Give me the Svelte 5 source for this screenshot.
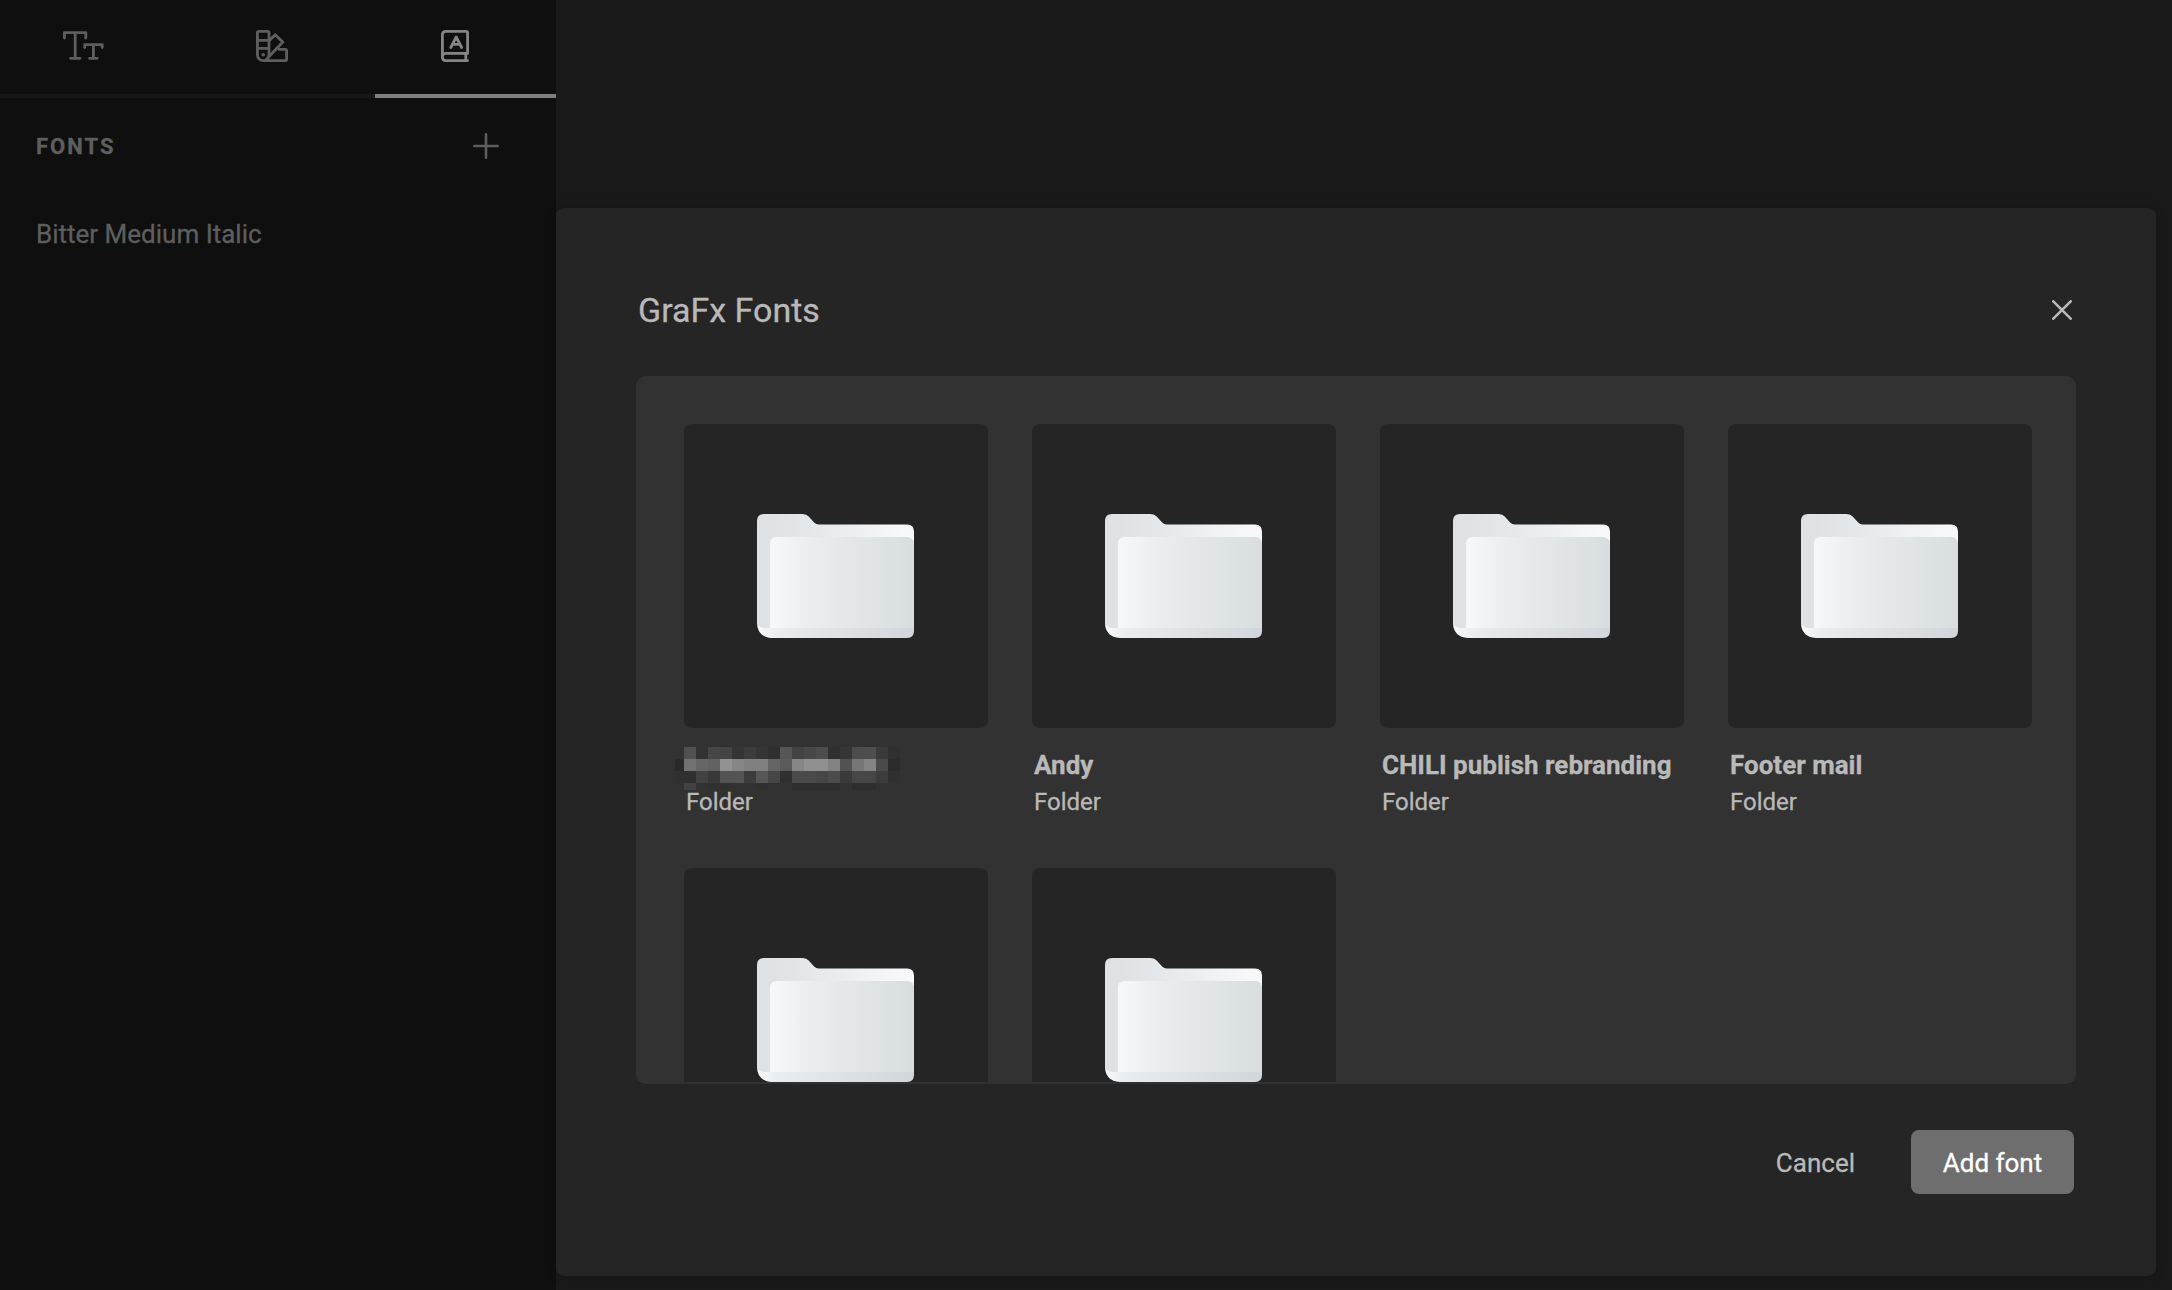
<script>
  const folders = [
    { id: 1, pixelated: true },
    { id: 2, name: 'Andy' },
    { id: 3, name: 'CHILI publish rebranding' },
    { id: 4, name: 'Footer mail' },
    { id: 5 },
    { id: 6 }
  ];

  // Grey levels of the pixelated name, one row per line of blocks
  const mosaic = [
    [50, 80, 50, 70, 68, 53, 60, 53, 48, 86, 67, 72, 77, 48, 54, 76, 78, 58, 48],
    [42, 114, 102, 98, 146, 134, 128, 128, 100, 90, 134, 144, 144, 130, 82, 118, 132, 74, 44],
    [48, 48, 66, 56, 84, 84, 60, 86, 70, 48, 74, 74, 70, 76, 58, 70, 70, 60, 48],
    [50, 66, 50, 48, 48, 50, 50, 48, 50, 50, 46, 46, 46, 46, 50, 46, 46, 50, 50]
  ];
</script>

<div class="app">
  <aside>
    <nav>
      <button class="tab" aria-label="Text styles">
        <svg class="tt" viewBox="0 0 41 29" fill="none" stroke="currentColor" stroke-width="2.8" stroke-linecap="round" stroke-linejoin="round">
          <path d="M1.4 7V1.6H22.8V7M12.2 1.6V27.3M7.5 27.3H17M21.7 16.6V13.7H39.2V16.6M30.4 13.7V27.3M26.6 27.3H34.2" />
        </svg>
      </button>
      <button class="tab" aria-label="Colors">
        <svg class="swatch" viewBox="0 0 32 32" fill="none" stroke="currentColor" stroke-width="2.8" stroke-linejoin="round">
          <path d="M1.4 2.8Q1.4 1.4 2.8 1.4H11.6Q13 1.4 13 2.8V24.8A5.8 5.8 0 0 1 1.4 24.8ZM1.4 10.3H13M1.4 18.3H13M13 11L19.2 4.8L26.8 12L9.8 30M22 19.4H29.2Q30.6 19.4 30.6 20.8V29.2Q30.6 30.6 29.2 30.6H7.2" />
          <circle cx="7.2" cy="24.8" r="1.8" fill="currentColor" stroke="none" />
        </svg>
      </button>
      <button class="tab active" aria-label="Fonts">
        <svg class="book" viewBox="0 0 28 32" fill="none" stroke="currentColor" stroke-width="2.8" stroke-linecap="round" stroke-linejoin="round">
          <path d="M26.6 23.4V3Q26.6 1.4 25 1.4H4.8Q1.4 1.4 1.4 4.8V27.2Q1.4 30.6 4.8 30.6H26.6M1.4 26.6Q1.4 23.4 4.8 23.4H26.6M24.8 23.4V30.6M9.8 17.5L15.2 7L20.6 17.5M11.8 14.3H18.6" />
        </svg>
      </button>
    </nav>
    <div class="heading">
      <h2>FONTS</h2>
      <button class="add" aria-label="Add">
        <svg viewBox="0 0 26 26" fill="none" stroke="currentColor" stroke-width="2.6" stroke-linecap="round"><path d="M13 1.3V24.7M1.3 13H24.7" /></svg>
      </button>
    </div>
    <p class="font">Bitter Medium Italic</p>
  </aside>

  <main>
    <section class="modal">
      <header>
        <h1>GraFx Fonts</h1>
        <button class="close" aria-label="Close">
          <svg viewBox="0 0 20 20" fill="none" stroke="currentColor" stroke-width="2.6" stroke-linecap="round"><path d="M1.3 1.3L18.7 18.7M18.7 1.3L1.3 18.7" /></svg>
        </button>
      </header>

      <div class="panel">
        <div class="grid">
          {#each folders as f (f.id)}
            <article>
              <div class="thumb">
                <svg viewBox="0 0 158 124" preserveAspectRatio="none">
                  <defs>
                    <linearGradient id="back{f.id}"><stop offset="0.1" stop-color="#dee2e5" /><stop offset="0.5" stop-color="#e8ecef" /><stop offset="0.92" stop-color="#f8f8fa" /></linearGradient>
                    <linearGradient id="front{f.id}"><stop offset="0" stop-color="#f7f8fa" /><stop offset="0.3" stop-color="#e9edf0" /><stop offset="1" stop-color="#d8dde0" /></linearGradient>
                    <linearGradient id="base{f.id}"><stop offset="0" stop-color="#fafafb" /><stop offset="0.12" stop-color="#e9edef" /><stop offset="1" stop-color="#d1d6da" /></linearGradient>
                  </defs>
                  <path fill="url(#base{f.id})" d="M0 100H158V117Q158 124 151 124H15Q0 123 0 108Z" />
                  <path fill="url(#back{f.id})" d="M0 7Q0 0 7 0H46Q50 0 52 2.5L57.5 8.5Q59.5 10.5 62 10.5H151Q158 10.5 158 17.5V114H8Q0 114 0 107Z" />
                  <path fill="url(#front{f.id})" d="M13 30Q13 23 20 23H151Q156 23 158 28V114H13Z" />
                </svg>
              </div>
              {#if f.pixelated}
                <div class="redacted">
                  {#each mosaic as row}
                    {#each row as v}
                      <i style:background="rgb({v},{v},{v})"></i>
                    {/each}
                  {/each}
                </div>
              {/if}
              {#if f.name}
                <h3>{f.name}</h3>
              {/if}
              {#if f.name || f.pixelated}
                <p>Folder</p>
              {/if}
            </article>
          {/each}
        </div>
      </div>

      <footer>
        <button class="cancel">Cancel</button>
        <button class="primary">Add font</button>
      </footer>
    </section>
  </main>
</div>

<style>
  :global(body) { margin: 0; background: #191919; overflow: hidden; }
  .app {
    display: flex;
    width: 2172px;
    height: 1290px;
    box-sizing: border-box;
    overflow: hidden;
    background: #191919;
    font-family: Roboto, "Liberation Sans", sans-serif;
    -webkit-text-stroke: 0.3px currentColor;
  }
  h1, h2, h3, p { margin: 0; }
  button { border: 0; padding: 0; background: none; color: inherit; font: inherit; }
  svg { display: block; }

  aside { width: 556px; flex: none; background: #0f0f0f; color: #5e5e5e; }
  nav { display: grid; grid-template-columns: 194px 181px 181px; height: 98px; }
  .tab { display: flex; align-items: flex-start; justify-content: center; box-sizing: border-box; border-bottom: 4px solid #171717; }
  .tab.active { border-color: #7f7f7f; color: #858585; }
  .tt { width: 41px; height: 29px; margin: 31px 28px 0 0; }
  .swatch { width: 32px; height: 32px; margin: 30px 25px 0 0; }
  .book { width: 28px; height: 32px; margin: 30px 21px 0 0; }
  .heading { display: flex; align-items: center; justify-content: space-between; height: 96px; padding: 0 57px 0 36px; }
  h2 { padding-top: 2px; font-size: 22px; line-height: 28px; font-weight: 700; letter-spacing: 2px; }
  .add svg { width: 26px; height: 26px; }
  .font { padding: 24px 36px; font-size: 26px; line-height: 33px; }

  main { flex: 1; min-width: 0; padding: 208px 16px 14px 0; }
  .modal {
    box-sizing: border-box;
    height: 1068px;
    padding: 0 80px;
    border-radius: 8px;
    background: #252525;
    box-shadow: 0 0 12px rgba(0, 0, 0, 0.15);
    color: #b9b9b9;
  }
  header { display: flex; align-items: center; justify-content: space-between; height: 168px; padding: 36px 4px 0 2px; box-sizing: border-box; }
  h1 { font-size: 34px; line-height: 42px; font-weight: 400; }
  .close svg { width: 20px; height: 20px; }

  .panel { height: 708px; box-sizing: border-box; border: 2px solid #323232; border-radius: 10px; background: #323232; overflow: hidden; }
  .grid { display: grid; grid-template-columns: repeat(4, 304px); column-gap: 44px; padding: 46px 0 0 46px; }
  article { height: 444px; }
  .thumb { display: flex; align-items: center; justify-content: center; height: 304px; border-radius: 8px; background: #252525; }
  .thumb svg { width: 157px; height: 124px; margin-right: 1px; }
  h3 { margin: 20px 0 0 2px; font-size: 26px; line-height: 34px; font-weight: 700; white-space: nowrap; }
  article p { padding: 4px 0 0 2px; font-size: 24px; line-height: 32px; }
  .redacted { display: grid; grid-template: 12px 12px 12px 7px / 9px repeat(18, 12px); margin: 19px 0 -8px -9px; }

  footer { display: flex; justify-content: flex-end; gap: 56px; padding: 46px 2px 0; font-size: 26px; }
  .cancel, .primary { height: 64px; padding-top: 1px; }
  .primary { width: 163px; border-radius: 8px; background: #6e6e6e; color: #fff; }
</style>
